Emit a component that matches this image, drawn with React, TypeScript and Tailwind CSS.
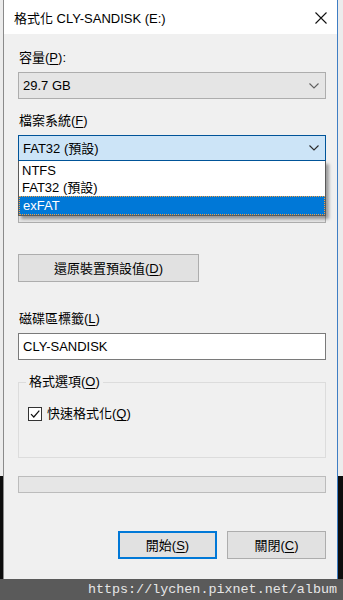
import React from "react";

const font = "font-['Liberation_Sans','Noto_Sans_CJK_TC',sans-serif]";

function Chevron({ dark }: { dark?: boolean }) {
  return (
    <svg width="10" height="6" viewBox="0 0 10 6" className="shrink-0">
      <path d="M0.5 0.5 L5 5 L9.5 0.5" fill="none" stroke={dark ? "#2b2b2b" : "#606060"} strokeWidth="1.1" />
    </svg>
  );
}

function Mn({ k }: { k: string }) {
  return (
    <>
      (<span className="underline underline-offset-2 decoration-1">{k}</span>)
    </>
  );
}

function Label({ children, className = "" }: { children?: React.ReactNode; className?: string }) {
  return <div className={`h-[16px] leading-[16px] text-[13px] text-black pl-px ${className}`}>{children}</div>;
}

function Combo({ value, focused, className = "" }: { value?: string; focused?: boolean; className?: string }) {
  return (
    <div
      className={`flex items-center justify-between w-[308px] border pl-[4px] pr-[6px] text-[13px] leading-none text-black ${
        focused ? "bg-[#cce4f7] border-[#005499] h-[26px]" : "bg-[#e5e5e5] border-[#adadad] h-[27px]"
      } ${className}`}
    >
      <span>{value}</span>
      <Chevron dark={focused} />
    </div>
  );
}

export default function App() {
  return (
    <div className={`relative w-[343px] h-[600px] overflow-hidden bg-[linear-gradient(to_bottom,#ececec_0,#ececec_476px,#0d0d0d_476px)] ${font}`}>
      {/* dialog window */}
      <div className="ml-[3px] w-[335px] h-[579px] flex flex-col border-l border-r border-l-[#8a8a8a] border-r-[#3f7ec4] bg-[#f0f0f0]">
        {/* title bar */}
        <div className="h-[34px] shrink-0 bg-white flex items-center justify-between pl-[10px] pr-[10px]">
          <span className="text-[13px] leading-none text-black mt-[2px]">格式化 CLY-SANDISK (E:)</span>
          <svg width="12" height="12" viewBox="0 0 12 12" className="mt-[1px]">
            <path d="M0.5 0.5 L11.5 11.5 M11.5 0.5 L0.5 11.5" stroke="#111" strokeWidth="1.1" />
          </svg>
        </div>

        {/* body */}
        <div className="relative flex flex-col pl-[14px]">
          <Label className="mt-[16px]">
            容量<Mn k="P" />:
          </Label>
          <Combo value="29.7 GB" className="mt-[6px]" />

          <Label className="mt-[14px]">
            檔案系統<Mn k="F" />
          </Label>
          <Combo value="FAT32 (預設)" focused className="mt-[6px]" />

          {/* allocation size row, covered by the open list */}
          <Label className="mt-[14px]" />
          <Combo className="mt-[5px]" />

          <button className="mt-[31px] w-[181px] h-[28px] bg-[#e1e1e1] border border-[#adadad] text-[13px] leading-none text-black">
            還原裝置預設值<Mn k="D" />
          </button>

          <Label className="mt-[29px]">
            磁碟區標籤<Mn k="L" />
          </Label>
          <div className="mt-[6px] w-[308px] h-[27px] bg-white border border-[#7a7a7a] flex items-center pl-[4px] text-[13px] leading-none text-black">
            CLY-SANDISK
          </div>

          {/* group box */}
          <div className="relative mt-[22px] w-[308px] h-[76px] border border-[#dcdcdc]">
            <span className="absolute -top-[9px] left-[7px] bg-[#f0f0f0] px-[3px] text-[13px] leading-[16px] text-black">
              格式選項<Mn k="O" />
            </span>
            <div className="flex items-center mt-[23px] ml-[9px] gap-[5px]">
              <div className="w-[14px] h-[14px] border border-[#333] bg-white flex items-center justify-center">
                <svg width="12" height="12" viewBox="0 0 12 12">
                  <path d="M2 6.2 L4.8 9 L10.3 2.6" fill="none" stroke="#111" strokeWidth="1.2" />
                </svg>
              </div>
              <span className="text-[13px] leading-[16px] text-black">
                快速格式化<Mn k="Q" />
              </span>
            </div>
          </div>

          {/* progress */}
          <div className="mt-[18px] w-[308px] h-[17px] bg-[#e6e6e6] border border-[#bcbcbc]" />

          {/* buttons */}
          <div className="mt-[38px] w-[308px] flex justify-end gap-[10px]">
            <button className="w-[99px] h-[28px] bg-[#e1e1e1] border-2 border-[#0078d7] text-[13px] leading-none text-black">
              開始<Mn k="S" />
            </button>
            <button className="w-[99px] h-[28px] bg-[#e1e1e1] border border-[#adadad] text-[13px] leading-none text-black">
              關閉<Mn k="C" />
            </button>
          </div>

          {/* open dropdown list */}
          <div className="absolute left-[14px] top-[127px] w-[308px] h-[55px] bg-white border border-[#5a5a5a] border-t-0 shadow-[3px_3px_3px_rgba(0,0,0,0.35)] flex flex-col text-[13px] text-black">
            <div className="h-[17px] leading-[17px] pl-[3px] mt-px">NTFS</div>
            <div className="h-[17px] leading-[17px] pl-[3px]">FAT32 (預設)</div>
            <div className="h-[19px] leading-[17px] pl-[3px] bg-[#0078d7] text-white border border-dotted border-[#f5a040]">
              exFAT
            </div>
          </div>
        </div>
      </div>

      {/* watermark strip */}
      <div className="h-[21px] bg-[#5a5a5a] flex items-center justify-end pr-[6px]">
        <span className="font-['Liberation_Mono',monospace] text-[13.4px] leading-none text-[#e6e6e6]">
          https://lychen.pixnet.net/album
        </span>
      </div>
    </div>
  );
}
